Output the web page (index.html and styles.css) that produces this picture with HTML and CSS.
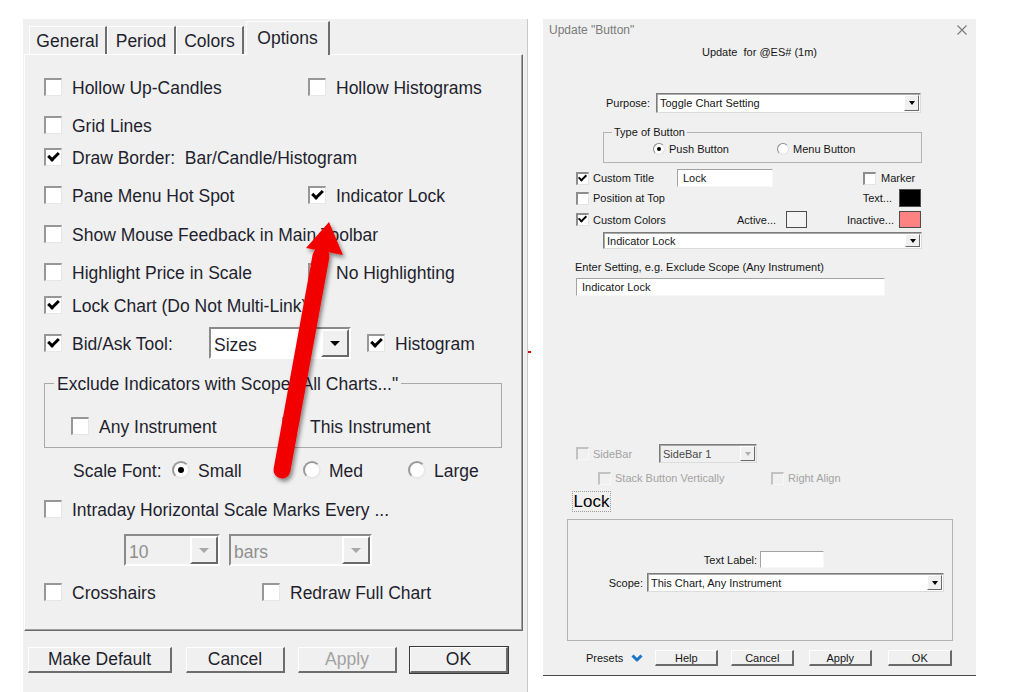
FILE: index.html
```html
<!DOCTYPE html>
<html lang="en">
<head>
    <meta charset="UTF-8">
    <title>Chart Options - Update Button</title>
    <link rel="stylesheet" href="styles.css">
</head>
<body>
<div class="page">

    <!-- Chart options dialog -->
    <div class="opts">
        <div class="tabs">
            <div class="tab t-gen">General</div>
            <div class="tab t-per">Period</div>
            <div class="tab t-col">Colors</div>
            <div class="tab t-opt on">Options</div>
        </div>

        <div class="panel">
            <div class="row">
                <label class="cell c1"><span class="cb"></span>Hollow Up-Candles</label>
                <label class="cell"><span class="cb"></span>Hollow Histograms</label>
            </div>
            <div class="row mt8">
                <label class="cell"><span class="cb"></span>Grid Lines</label>
            </div>
            <div class="row mt2">
                <label class="cell"><span class="cb on"></span>Draw Border:&nbsp; Bar/Candle/Histogram</label>
            </div>
            <div class="row mt8">
                <label class="cell c1"><span class="cb"></span>Pane Menu Hot Spot</label>
                <label class="cell"><span class="cb on"></span>Indicator Lock</label>
            </div>
            <div class="row mt9">
                <label class="cell"><span class="cb"></span>Show Mouse Feedback in Main Toolbar</label>
            </div>
            <div class="row mt8">
                <label class="cell c1"><span class="cb"></span>Highlight Price in Scale</label>
                <label class="cell"><span class="cb"></span>No Highlighting</label>
            </div>
            <div class="row mt3">
                <label class="cell"><span class="cb on"></span>Lock Chart (Do Not Multi-Link)</label>
            </div>
            <div class="row tall mt7">
                <label class="cell c-bid"><span class="cb on"></span>Bid/Ask Tool:</label>
                <div class="combo w-sizes"><span class="val">Sizes</span><span class="dd"></span></div>
                <label class="cell hist"><span class="cb on"></span>Histogram</label>
            </div>

            <fieldset class="group mt13">
                <legend>Exclude Indicators with Scope "All Charts..."</legend>
                <div class="row in-group">
                    <label class="cell c-any"><span class="cb"></span>Any Instrument</label>
                    <label class="cell"><span class="cb"></span>This Instrument</label>
                </div>
            </fieldset>

            <div class="row scale mt7">
                <span class="scale-lbl">Scale Font:</span>
                <label class="cell c-small"><span class="rad on"></span>Small</label>
                <label class="cell c-med"><span class="rad"></span>Med</label>
                <label class="cell"><span class="rad"></span>Large</label>
            </div>
            <div class="row mt9">
                <label class="cell"><span class="cb"></span>Intraday Horizontal Scale Marks Every ...</label>
            </div>
            <div class="row tall marks mt10">
                <div class="combo off w-ten"><span class="val">10</span><span class="dd"></span></div>
                <div class="combo off w-bars"><span class="val">bars</span><span class="dd"></span></div>
            </div>
            <div class="row mt11">
                <label class="cell c-cross"><span class="cb"></span>Crosshairs</label>
                <label class="cell"><span class="cb"></span>Redraw Full Chart</label>
            </div>
        </div>

        <div class="btns">
            <button class="btn b-def">Make Default</button>
            <button class="btn b-cancel">Cancel</button>
            <button class="btn b-apply" disabled>Apply</button>
            <button class="btn b-ok">OK</button>
        </div>
    </div>

    <!-- Update "Button" dialog -->
    <div class="upd">
        <div class="ttl">
            <span>Update "Button"</span>
            <svg class="close" width="10" height="10" viewBox="0 0 10 10"><path d="M0.5 0.5 L9.5 9.5 M9.5 0.5 L0.5 9.5" stroke="#7a7a7a" stroke-width="1.1" fill="none"/></svg>
        </div>
        <div class="sub">Update&nbsp; for @ES# (1m)</div>

        <div class="urow purpose">
            <span class="ulbl">Purpose:</span>
            <div class="ucombo w-purpose"><span class="val">Toggle Chart Setting</span><span class="udd"></span></div>
        </div>

        <fieldset class="ugroup type">
            <legend>Type of Button</legend>
            <div class="urow radios">
                <label class="ucell w-push"><span class="urad on"></span>Push Button</label>
                <label class="ucell"><span class="urad"></span>Menu Button</label>
            </div>
        </fieldset>

        <div class="urow title-row">
            <label class="ucell w-ctitle"><span class="ucb on"></span>Custom Title</label>
            <div class="utext w-title">Lock</div>
            <label class="ucell marker"><span class="ucb"></span>Marker</label>
        </div>
        <div class="urow top-row">
            <label class="ucell"><span class="ucb"></span>Position at Top</label>
            <span class="swatch-lbl">Text...</span>
            <span class="swatch sw-text"></span>
        </div>
        <div class="urow colors-row">
            <label class="ucell w-ccolors"><span class="ucb on"></span>Custom Colors</label>
            <span>Active...</span>
            <span class="swatch sw-active"></span>
            <span class="swatch-lbl">Inactive...</span>
            <span class="swatch sw-inactive"></span>
        </div>
        <div class="ucombo w-setting"><span class="val">Indicator Lock</span><span class="udd"></span></div>

        <div class="enter-lbl">Enter Setting, e.g. Exclude Scope (Any Instrument)</div>
        <div class="utext w-enter">Indicator Lock</div>

        <div class="urow sidebar-row">
            <label class="ucell dis w-sidebar"><span class="ucb"></span>SideBar</label>
            <div class="ucombo off w-sidebar-combo"><span class="val">SideBar 1</span><span class="udd"></span></div>
        </div>
        <div class="urow stack-row">
            <label class="ucell dis w-stack"><span class="ucb"></span>Stack Button Vertically</label>
            <label class="ucell dis"><span class="ucb"></span>Right Align</label>
        </div>

        <div class="preview">Lock</div>

        <div class="ubox">
            <div class="urow label-row">
                <span class="ulbl w-textlbl">Text Label:</span>
                <div class="utext w-textlabel"></div>
            </div>
            <div class="urow scope-row">
                <span class="ulbl w-scope">Scope:</span>
                <div class="ucombo w-scope-combo"><span class="val">This Chart, Any Instrument</span><span class="udd"></span></div>
            </div>
        </div>

        <div class="urow ubtns">
            <span>Presets</span>
            <svg class="chev" width="12" height="8" viewBox="0 0 12 8"><path d="M1.5 1.5 L6 6 L10.5 1.5" stroke="#1a74cc" stroke-width="3" fill="none" stroke-linejoin="round"/></svg>
            <button class="ubtn b-help">Help</button>
            <button class="ubtn b-ucancel">Cancel</button>
            <button class="ubtn b-uapply">Apply</button>
            <button class="ubtn b-uok">OK</button>
        </div>
    </div>

    <!-- red annotation arrow drawn over both dialogs -->
    <svg class="arrow" width="1012" height="692" viewBox="0 0 1012 692">
        <defs>
            <filter id="shadow" x="-30%" y="-10%" width="160%" height="130%">
                <feDropShadow dx="2" dy="3" stdDeviation="2" flood-color="#000" flood-opacity="0.45"/>
            </filter>
        </defs>
        <g filter="url(#shadow)">
            <line x1="282" y1="470" x2="321" y2="256" stroke="#f20000" stroke-width="17" stroke-linecap="round"/>
            <polygon points="329,222 343,255 306,248" fill="#f20000"/>
        </g>
        <line x1="528" y1="352" x2="531" y2="352" stroke="#c81010" stroke-width="2"/>
    </svg>
</div>
</body>
</html>
```

FILE: styles.css
```css
body {
    margin: 0;
    background-color: #fff;
    font-family: "Liberation Sans", Arial, sans-serif;
}
.page {
    position: relative;
    display: flex;
    align-items: flex-start;
    width: 1012px;
    height: 692px;
    overflow: hidden;
}

/* ---------- left: options dialog ---------- */
.opts {
    margin: 19px 0 0 23px;
    width: 505px;
    height: 673px;
    box-sizing: border-box;
    padding-left: 1px;
    background-color: #f0f0f0;
    border-right: 1px solid #c9c9c9;
    font-size: 17.5px;
    color: #1f1f2e;
}
.tabs {
    display: flex;
    align-items: flex-end;
    height: 35px;
    padding-left: 5px;
}
.tab {
    box-sizing: border-box;
    height: 28px;
    line-height: 28px;
    text-align: center;
    border-top: 1px solid #fff;
    border-left: 1px solid #fff;
    border-right: 2px solid #6e6e6e;
}
.t-gen { width: 78px; }
.t-per { width: 69px; }
.t-col { width: 68px; }
.t-opt { width: 84px; margin-left: 2px; }
.tab.on {
    position: relative;
    z-index: 1;
    height: 34px;
    line-height: 32px;
    margin-bottom: -1px;
    background-color: #f0f0f0;
}
.panel {
    width: 499px;
    box-sizing: border-box;
    padding: 17px 0 23px 19px;
    border: 1px solid;
    border-color: #fff #6a6a6a #6a6a6a #fff;
    box-shadow: inset -1px -1px 0 #a0a0a0;
}
.row {
    display: flex;
    align-items: center;
    height: 30px;
}
.row.tall { height: 32px; }
.mt2 { margin-top: 2px; }
.mt3 { margin-top: 3px; }
.mt7 { margin-top: 7px; }
.mt8 { margin-top: 8px; }
.mt9 { margin-top: 9px; }
.mt10 { margin-top: 10px; }
.mt11 { margin-top: 11px; }
.mt13 { margin-top: 13px; }

.cell {
    display: flex;
    align-items: center;
    gap: 10px;
    padding-top: 2px;
    white-space: nowrap;
}
.c1 { width: 264px; }
.c-bid { width: 165px; }
.c-any { width: 211px; }
.c-cross { width: 218px; }
.hist { margin-left: 16px; }

.cb {
    position: relative;
    flex: none;
    width: 18px;
    height: 18px;
    margin-top: -2px;
    box-sizing: border-box;
    background-color: #fff;
    border-style: solid;
    border-width: 2px 1px 1px 2px;
    border-color: #979797 #e6e6e6 #e6e6e6 #979797;
}
.cb.on::after {
    content: "";
    position: absolute;
    left: 4px;
    top: 0;
    width: 4px;
    height: 8px;
    border: solid #000;
    border-width: 0 3px 3px 0;
    transform: rotate(45deg);
}
.rad {
    position: relative;
    flex: none;
    width: 18px;
    height: 18px;
    margin-top: -2px;
    box-sizing: border-box;
    border-radius: 50%;
    background-color: #fff;
    border: 2px solid;
    border-color: #9a9a9a #e8e8e8 #e8e8e8 #9a9a9a;
}
.rad.on::after {
    content: "";
    position: absolute;
    left: 4px;
    top: 4px;
    width: 6px;
    height: 6px;
    border-radius: 50%;
    background-color: #000;
}

.combo {
    display: flex;
    height: 32px;
    box-sizing: border-box;
    background-color: #fff;
    border: 2px solid;
    border-color: #8a8a8a #fff #fff #8a8a8a;
}
.combo .val {
    flex: 1;
    padding: 2px 0 0 3px;
    line-height: 28px;
}
.combo .dd {
    display: flex;
    align-items: center;
    justify-content: center;
    width: 28px;
    box-sizing: border-box;
    background-color: #f0f0f0;
    border: 2px solid;
    border-color: #fff #6a6a6a #6a6a6a #fff;
}
.combo .dd::after {
    content: "";
    border-left: 5px solid transparent;
    border-right: 5px solid transparent;
    border-top: 5px solid #000;
}
.combo.off { background-color: #f0f0f0; }
.combo.off .val { color: #8f8f8f; }
.combo.off .dd::after { border-top-color: #a8a8a8; }
.w-sizes { width: 142px; }
.w-ten { width: 96px; }
.w-bars { width: 143px; margin-left: 9px; }
.marks { padding-left: 80px; }

.group {
    width: 458px;
    box-sizing: border-box;
    margin-left: 0;
    margin-right: 0;
    padding: 17px 0 6px 9px;
    border: 1px solid #a9a9a9;
}
.group legend {
    padding: 2px 3px 0;
    line-height: 20px;
}
.in-group { margin-left: 17px; }

.scale { padding-left: 29px; }
.scale-lbl { width: 99px; padding-top: 2px; }
.scale .cell { gap: 8px; }
.c-small { width: 131px; }
.c-med { width: 105px; }

.btns {
    display: flex;
    margin-top: 16px;
    padding-left: 4px;
}
.btn {
    height: 26px;
    box-sizing: border-box;
    padding: 0;
    font-family: inherit;
    font-size: 17.5px;
    color: #1f1f2e;
    background-color: #f0f0f0;
    border-style: solid;
    border-width: 1px 2px 2px 1px;
    border-color: #fff #6d6d6d #6d6d6d #fff;
}
.b-def { width: 144px; }
.b-cancel { width: 99px; margin-left: 14px; }
.b-apply { width: 99px; margin-left: 13px; color: #a2a2a2; }
.b-ok { width: 98px; margin-left: 13px; outline: 1px solid #3a3a3a; }

/* ---------- right: update button dialog ---------- */
.upd {
    margin: 19px 0 0 15px;
    width: 433px;
    height: 657px;
    box-sizing: border-box;
    background-color: #f0f0f0;
    border-bottom: 1px solid #4a4a4a;
    font-size: 11px;
    color: #161616;
}
.ttl {
    display: flex;
    justify-content: space-between;
    align-items: center;
    height: 22px;
    padding: 0 9px 0 6px;
    font-size: 12px;
    color: #7b7b7b;
}
.sub {
    height: 22px;
    line-height: 22px;
    text-align: center;
}
.urow {
    display: flex;
    align-items: center;
}
.ulbl {
    box-sizing: border-box;
    text-align: right;
}
.ucell {
    display: flex;
    align-items: center;
    gap: 4px;
    white-space: nowrap;
}
.ucell.dis { color: #a3a3a3; }

.ucb {
    position: relative;
    flex: none;
    width: 13px;
    height: 13px;
    box-sizing: border-box;
    background-color: #fff;
    border-style: solid;
    border-width: 2px 1px 1px 2px;
    border-color: #8d8d8d #e3e3e3 #e3e3e3 #8d8d8d;
}
.ucb.on::after {
    content: "";
    position: absolute;
    left: 2px;
    top: -1px;
    width: 3px;
    height: 6px;
    border: solid #000;
    border-width: 0 2px 2px 0;
    transform: rotate(45deg);
}
.dis .ucb {
    background-color: #f0f0f0;
    border-color: #c2c2c2 #f7f7f7 #f7f7f7 #c2c2c2;
}
.urad {
    position: relative;
    flex: none;
    width: 12px;
    height: 12px;
    box-sizing: border-box;
    border-radius: 50%;
    background-color: #fff;
    border: 1px solid;
    border-color: #8a8a8a #e2e2e2 #e2e2e2 #8a8a8a;
}
.urad.on::after {
    content: "";
    position: absolute;
    left: 3px;
    top: 3px;
    width: 4px;
    height: 4px;
    border-radius: 50%;
    background-color: #000;
}

.ucombo {
    display: flex;
    box-sizing: border-box;
    background-color: #fff;
    border: 1px solid;
    border-color: #7c7c7c #dcdcdc #dcdcdc #7c7c7c;
    box-shadow: inset 1px 1px 0 #a9a9a9;
}
.ucombo .val {
    flex: 1;
    display: flex;
    align-items: center;
    padding-left: 3px;
    white-space: nowrap;
}
.udd {
    display: flex;
    align-items: center;
    justify-content: center;
    width: 15px;
    margin: 1px;
    box-sizing: border-box;
    background-color: #f0f0f0;
    border: 1px solid;
    border-color: #fff #696969 #696969 #fff;
}
.udd::after {
    content: "";
    border-left: 3.5px solid transparent;
    border-right: 3.5px solid transparent;
    border-top: 4px solid #000;
}
.ucombo.off { background-color: #f0f0f0; }
.ucombo.off .val { color: #4a4a4a; }
.ucombo.off .udd::after { border-top-color: #b0b0b0; }

.utext {
    display: flex;
    align-items: center;
    box-sizing: border-box;
    padding-left: 5px;
    background-color: #fff;
    border: 1px solid;
    border-color: #a3a3a3 #f7f7f7 #f7f7f7 #a3a3a3;
}

.purpose {
    margin-top: 30px;
    height: 20px;
}
.purpose .ulbl { width: 110px; padding-right: 3px; }
.w-purpose { width: 265px; height: 20px; margin-left: 3px; }

.ugroup {
    width: 319px;
    box-sizing: border-box;
    margin: 12px 0 0 60px;
    padding: 2px 0 5px 8px;
    border: 1px solid #b3b3b3;
}
.ugroup legend {
    padding: 0 2px;
    line-height: 14px;
}
.radios {
    height: 16px;
    margin-left: 41px;
}
.w-push { width: 124px; }

.title-row {
    margin-top: 6px;
    height: 18px;
    padding-left: 33px;
}
.w-ctitle { width: 101px; }
.w-title { width: 96px; height: 18px; }
.marker { margin-left: 90px; gap: 5px; }

.top-row {
    margin-top: 2px;
    height: 18px;
    padding: 0 55px 0 33px;
}
.swatch-lbl { margin-left: auto; }
.swatch {
    box-sizing: border-box;
    border: 1px solid #4d4d4d;
}
.sw-text {
    width: 22px;
    height: 18px;
    margin-left: 7px;
    background-color: #000;
}
.colors-row {
    margin-top: 4px;
    height: 17px;
    padding: 0 55px 0 33px;
}
.w-ccolors { width: 161px; }
.sw-active {
    width: 21px;
    height: 17px;
    margin-left: 10px;
    background-color: #f4f4f4;
}
.sw-inactive {
    width: 22px;
    height: 17px;
    margin-left: 5px;
    background-color: #ff8282;
}
.w-setting {
    width: 319px;
    height: 17px;
    margin: 4px 0 0 60px;
}
.enter-lbl {
    margin-top: 11px;
    padding-left: 32px;
    line-height: 14px;
}
.w-enter {
    width: 309px;
    height: 18px;
    margin: 4px 0 0 33px;
}

.sidebar-row {
    margin-top: 148px;
    height: 19px;
    padding-left: 33px;
}
.w-sidebar { width: 83px; }
.w-sidebar-combo { width: 98px; height: 19px; }
.stack-row {
    margin-top: 8px;
    height: 14px;
    padding-left: 55px;
}
.w-stack { width: 173px; }

.preview {
    width: 39px;
    height: 21px;
    box-sizing: border-box;
    margin: 6px 0 0 29px;
    border: 1px dotted #9c9c9c;
    font-size: 17px;
    line-height: 19px;
    text-align: center;
    color: #000;
}

.ubox {
    width: 386px;
    box-sizing: border-box;
    margin: 7px 0 0 24px;
    padding: 31px 0 48px;
    border: 1px solid #b3b3b3;
}
.label-row { height: 17px; }
.w-textlbl { width: 190px; padding-right: 1px; }
.w-textlabel { width: 64px; height: 17px; margin-left: 2px; }
.scope-row {
    margin-top: 5px;
    height: 19px;
}
.w-scope { width: 78px; padding-right: 3px; }
.w-scope-combo { width: 297px; height: 19px; margin-left: 1px; }

.ubtns {
    margin-top: 9px;
    height: 16px;
    padding-left: 43px;
}
.chev { margin-left: 8px; }
.ubtn {
    width: 63px;
    height: 16px;
    box-sizing: border-box;
    padding: 0;
    font-family: inherit;
    font-size: 11px;
    color: #161616;
    background-color: #f0f0f0;
    border-style: solid;
    border-width: 1px 2px 2px 1px;
    border-color: #fff #6a6a6a #6a6a6a #fff;
}
.b-help { margin-left: 12px; }
.b-ucancel { margin-left: 13px; }
.b-uapply { margin-left: 15px; }
.b-uok { margin-left: 16px; width: 64px; }

/* annotation */
.arrow {
    position: absolute;
    left: 0;
    top: 0;
    pointer-events: none;
}
```
